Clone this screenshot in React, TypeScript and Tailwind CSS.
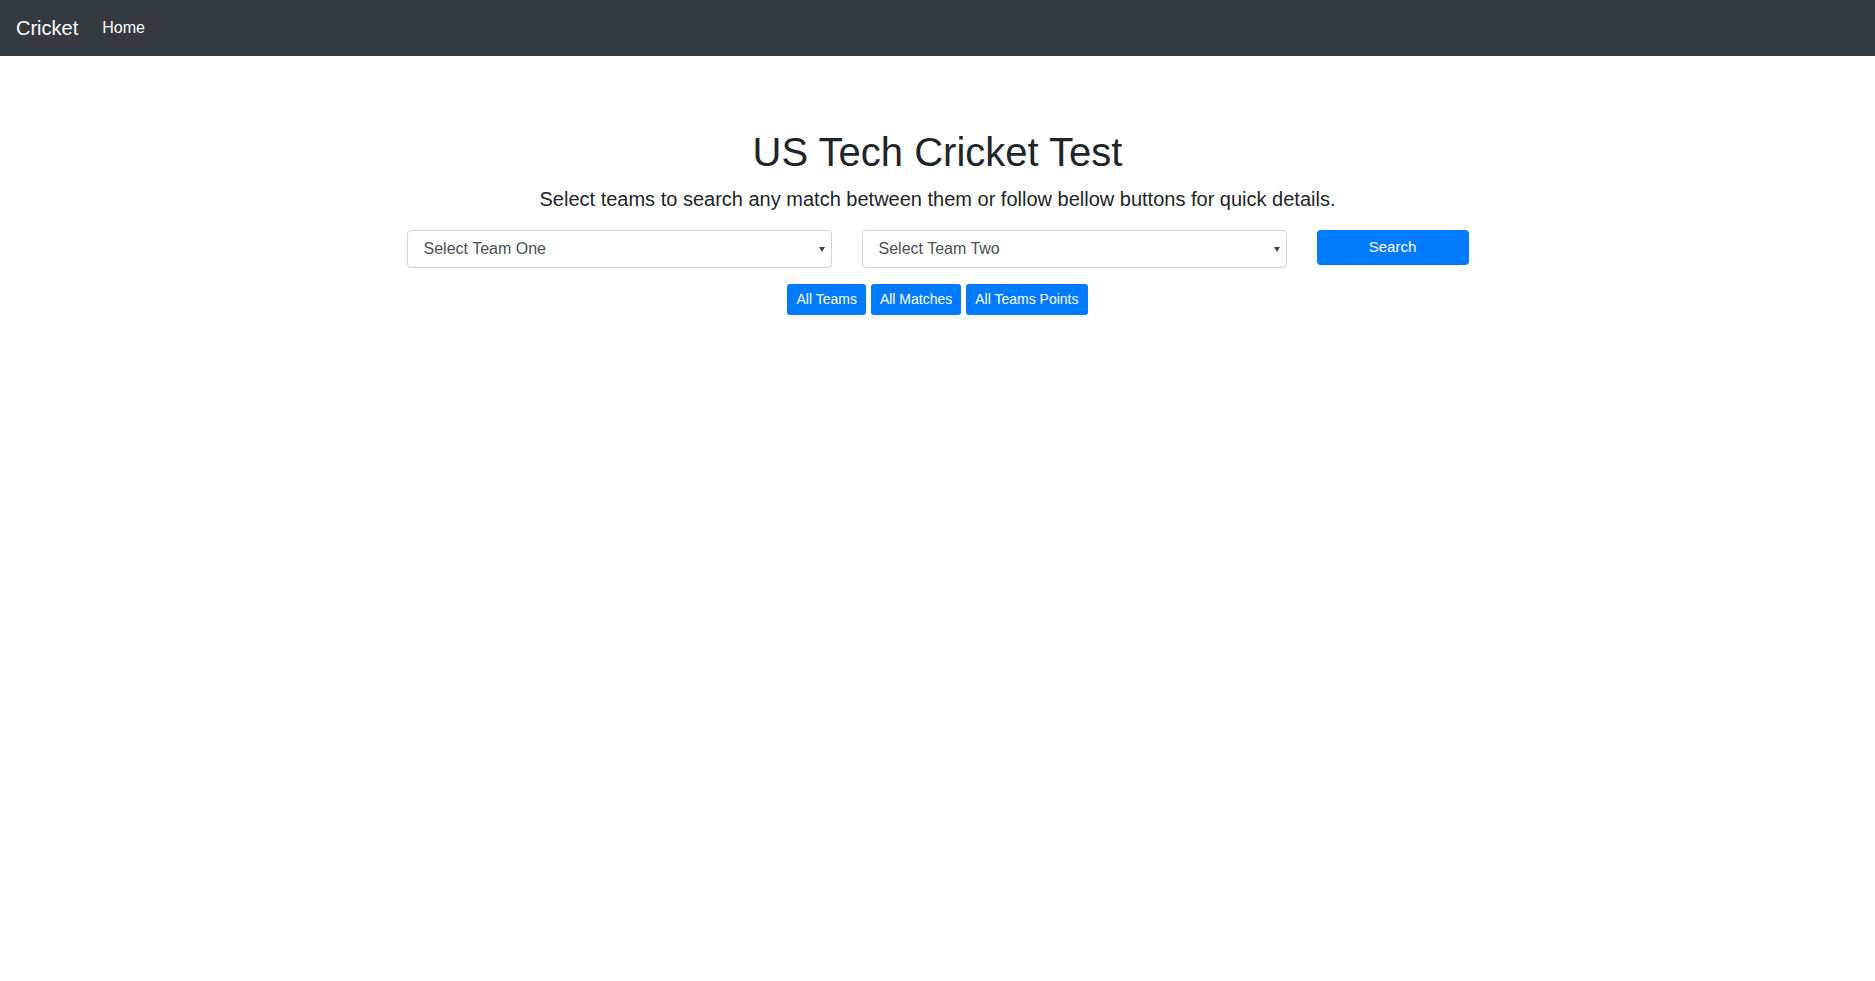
import React from "react";

const font = { fontFamily: '"Liberation Sans", Arial, sans-serif' };

function TeamSelect({ label }: { label: string }) {
  return (
    <div className="flex h-[38px] w-[425px] items-center justify-between rounded-[4px] border border-[#ced4da] bg-white pl-4 pr-[6px] text-[16px] text-[#495057]">
      <span>{label}</span>
      <svg width="6" height="5" viewBox="0 0 6 5">
        <path d="M0 0 L6 0 L3 5 Z" fill="#444" />
      </svg>
    </div>
  );
}

export default function App() {
  const quick = ["All Teams", "All Matches", "All Teams Points"];

  return (
    <div className="min-h-screen bg-white text-[#212529]" style={font}>
      <nav className="flex h-14 items-center bg-[#343a40] px-4">
        <span className="mr-6 text-[20px] text-white">Cricket</span>
        <span className="text-[16px] text-white">Home</span>
      </nav>

      <main className="flex flex-col items-center pt-[72px]">
        <h1 className="mb-2 text-[40px] leading-[1.2]">US Tech Cricket Test</h1>
        <p className="mb-4 text-[20px] leading-[1.5]">
          Select teams to search any match between them or follow bellow buttons for quick details.
        </p>

        <div className="flex items-start gap-[30px]">
          <TeamSelect label="Select Team One" />
          <TeamSelect label="Select Team Two" />
          <button className="h-[35px] w-[152px] rounded-[4px] bg-[#007bff] text-[15px] text-white">
            Search
          </button>
        </div>

        <div className="mt-4 flex gap-[5px]">
          {quick.map((q) => (
            <button
              key={q}
              className="h-[31px] rounded-[3px] bg-[#007bff] px-[9px] text-[14px] text-white"
            >
              {q}
            </button>
          ))}
        </div>
      </main>
    </div>
  );
}
